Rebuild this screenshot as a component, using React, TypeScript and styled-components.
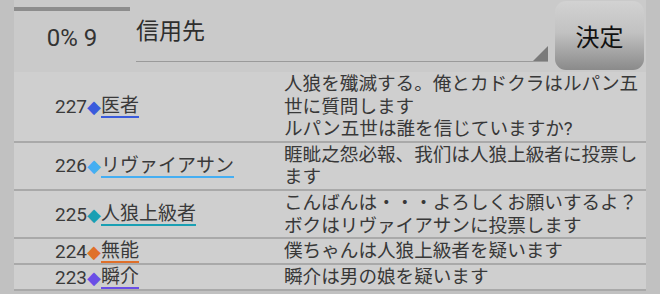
import styled, { createGlobalStyle } from "styled-components";

const GlobalStyle = createGlobalStyle`
  html, body {
    margin: 0;
    padding: 0;
    background: #c1c1c1;
  }
  body {
    font-family: Roboto, "Noto Sans CJK JP", sans-serif;
    color: #363636;
  }
`;

type Post = {
  no: number;
  name: string;
  color: string;
  lines: string[];
};

const posts: Post[] = [
  {
    no: 227,
    name: "医者",
    color: "#3a5bdc",
    lines: ["人狼を殲滅する。俺とカドクラはルパン五世に質問します", "ルパン五世は誰を信じていますか?"],
  },
  {
    no: 226,
    name: "リヴァイアサン",
    color: "#45aef2",
    lines: ["睚眦之怨必報、我们は人狼上級者に投票します"],
  },
  {
    no: 225,
    name: "人狼上級者",
    color: "#1a9fb3",
    lines: ["こんばんは・・・よろしくお願いするよ？", "ボクはリヴァイアサンに投票します"],
  },
  { no: 224, name: "無能", color: "#e0702a", lines: ["僕ちゃんは人狼上級者を疑います"] },
  { no: 223, name: "瞬介", color: "#6a4ee6", lines: ["瞬介は男の娘を疑います"] },
];

export default function App() {
  return (
    <>
      <GlobalStyle />
      <Screen>
        <Header>
          <Progress>
            <ProgressTrack />
            <ProgressLabel>0% 9</ProgressLabel>
          </Progress>
          <Spinner>
            <SpinnerText>信用先</SpinnerText>
            <SpinnerArrow />
          </Spinner>
          <DecideButton>決定</DecideButton>
        </Header>
        <List>
          {posts.map((p) => (
            <Row key={p.no}>
              <Speaker>
                <span>{p.no}</span>
                <Diamond $color={p.color}>◆</Diamond>
                <Name $color={p.color}>{p.name}</Name>
              </Speaker>
              <Message>
                {p.lines.map((l, i) => (
                  <div key={i}>{l}</div>
                ))}
              </Message>
            </Row>
          ))}
        </List>
      </Screen>
    </>
  );
}

const Screen = styled.div`
  width: 632px;
  margin-left: 14px;
  height: 294px;
  overflow: hidden;
`;

const Header = styled.div`
  display: flex;
  height: 72px;
  background: #cacaca;
`;

const Progress = styled.div`
  width: 116px;
  display: flex;
  flex-direction: column;
  align-items: center;
`;

const ProgressTrack = styled.div`
  align-self: stretch;
  height: 4px;
  margin-top: 7px;
  background: #8d8d8d;
`;

const ProgressLabel = styled.div`
  margin-top: 13px;
  font-size: 24px;
  line-height: 28px;
  color: #333;
`;

const Spinner = styled.div`
  position: relative;
  width: 412px;
  height: 61px;
  margin-left: 6px;
  border-bottom: 1px solid #9a9a9a;
`;

const SpinnerText = styled.div`
  padding-top: 16px;
  font-size: 23px;
  line-height: 32px;
  color: #2e2e2e;
`;

const SpinnerArrow = styled.div`
  position: absolute;
  right: 0;
  bottom: 0;
  width: 0;
  height: 0;
  border-left: 15px solid transparent;
  border-bottom: 15px solid #7a7a7a;
`;

const DecideButton = styled.div`
  width: 89px;
  height: 69px;
  margin: 1px 0 0 7px;
  border-radius: 11px;
  background: linear-gradient(#d2d2d2 0%, #c2c2c2 45%, #8a8a8a 100%);
  display: flex;
  align-items: center;
  justify-content: center;
  font-size: 24px;
  color: #111;
`;

const List = styled.div`
  background: #cfcfcf;
`;

const Row = styled.div`
  display: grid;
  grid-template-columns: 270px 1fr;
  border-bottom: 2px solid #a9a9a9;
  padding-top: 1px;
`;

const Speaker = styled.div`
  display: flex;
  align-items: center;
  padding-left: 41px;
  font-size: 19px;
  line-height: 20px;
  color: #3a3a3a;
`;

const Diamond = styled.span<{ $color: string }>`
  color: ${(p) => p.$color};
  font-family: "DejaVu Sans", sans-serif;
  font-size: 18px;
  line-height: 20px;
`;

const Name = styled.span<{ $color: string }>`
  border-bottom: 2px solid ${(p) => p.$color};
  line-height: 21px;
`;

const Message = styled.div`
  font-size: 18.6px;
  line-height: 22.6px;
  color: #383838;
  padding-right: 4px;
`;
